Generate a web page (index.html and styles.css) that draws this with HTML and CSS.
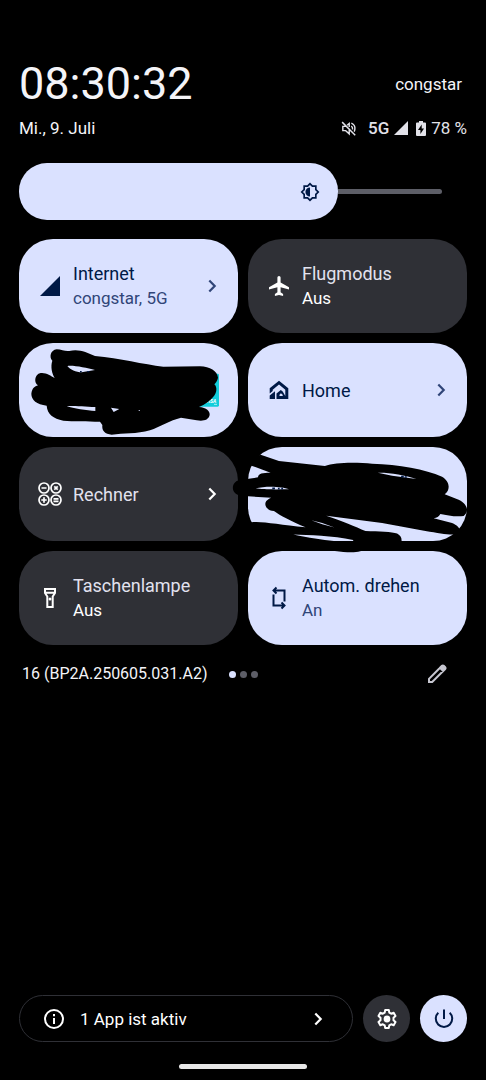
FILE: index.html
```html
<!DOCTYPE html>
<html lang="de">
<head>
<meta charset="utf-8">
<meta name="viewport" content="width=device-width, initial-scale=1">
<title>Schnelleinstellungen</title>
<link rel="stylesheet" href="styles.css">
</head>
<body>
<svg class="defs" aria-hidden="true">
  <symbol id="chevron" viewBox="0 0 24 24"><path d="M9.300 6.500 14.700 12l-5.400 5.500" fill="none" stroke="currentColor" stroke-width="2.200"/></symbol>
</svg>
<main class="panel">
  <header class="header">
    <div class="header-row">
      <time class="clock">08:30:32</time>
      <span class="carrier">congstar</span>
    </div>
    <div class="header-row">
      <span class="date">Mi., 9. Juli</span>
      <div class="status">
        <svg class="status-mute" viewBox="0 0 24 24" aria-label="Stumm">
          <g fill="none" stroke="currentColor" stroke-width="2">
            <path d="M9 9H4v6h4l5 4.500V13M10 7.500 13 5v5M16 8.500c1.500 1.200 2 2.500 1.800 5M16 4.500c3.500 1.500 5.500 4.500 5 8.500-.200 1.500-.500 2.500-1 3.300M3 3l18.500 18.500"/>
          </g>
        </svg>
        <span class="network">5G</span>
        <svg class="status-signal" viewBox="0 0 14 14" aria-hidden="true"><path d="M0 14H14V0z" fill="currentColor"/></svg>
        <svg class="status-battery" viewBox="0 0 10 15" aria-hidden="true"><path fill="currentColor" fill-rule="evenodd" d="M3 0h4v1.500h2a1 1 0 0 1 1 1V14a1 1 0 0 1-1 1H1a1 1 0 0 1-1-1V2.500a1 1 0 0 1 1-1h2zM5.700 3.500 2 9h2.400v4L8 7.500H5.700z"/></svg>
        <span>78 %</span>
      </div>
    </div>
  </header>

  <div class="brightness">
    <div class="brightness-level">
      <svg class="brightness-icon" viewBox="0 0 24 24" aria-hidden="true"><path fill="currentColor" d="M20 8.690V4h-4.690L12 .690 8.690 4H4v4.690L.690 12 4 15.310V20h4.690L12 23.310 15.310 20H20v-4.690L23.310 12 20 8.690zm-2 5.790V18h-3.520L12 20.480 9.520 18H6v-3.520L3.520 12 6 9.520V6h3.520L12 3.520 14.480 6H18v3.520L20.480 12 18 14.480zM12 6.500a5.500 5.500 0 0 0 0 11z"/></svg>
    </div>
    <div class="brightness-rail"></div>
    <input class="brightness-input" type="range" min="0" max="100" value="75" aria-label="Helligkeit">
  </div>

  <section class="tiles">
    <button class="tile on" type="button">
      <svg class="icon" viewBox="0 0 24 24"><path d="M2 22H22V2z" fill="currentColor"/></svg>
      <span class="tile-text"><span class="tile-name">Internet</span><span class="tile-state">congstar, 5G</span></span>
      <svg class="icon chevron"><use href="#chevron"/></svg>
    </button>
    <button class="tile" type="button">
      <svg class="icon" viewBox="0 0 24 24"><path fill="currentColor" d="M22 15.500v-2.300l-8.400-4.800V3.500a1.600 1.600 0 0 0-3.200 0v4.900L2 13.200v2.300l8.400-2.300v5l-2.500 1.900V22l4.100-1 4.100 1v-1.900l-2.500-1.900v-5z"/></svg>
      <span class="tile-text"><span class="tile-name">Flugmodus</span><span class="tile-state">Aus</span></span>
    </button>
    <button class="tile on" type="button" aria-label="Wallet">
      <svg class="scribble" viewBox="27 24 657 282">
        <rect x="540" y="116" width="87" height="99" rx="4" fill="#12cddb"/>
        <text class="card-brand" x="586" y="204">VISA</text>
        <path d="M612 208h9" stroke="#fff" stroke-width="2"/>
        <path fill-rule="evenodd" d="M140 43C155 43 165 50 178 48 205 40 230 52 255 63 330 70 400 88 460 95L570 94C600 95 622 108 624 128 622 138 617 143 613 148 622 155 621 175 610 185 600 198 585 208 567 216 590 218 600 228 599 240 595 256 580 259 560 256L513 248C480 256 450 275 420 286 380 297 340 295 305 299 285 297 275 288 277 270L270 260C230 259 190 260 160 257 130 250 112 238 110 212 80 208 64 195 64 176 66 160 74 154 84 151 72 145 72 118 92 114 108 112 122 122 134 129 126 115 121 95 127 77 117 68 121 45 140 43ZM172 93C180 104 198 112 215 112L255 105C230 99 190 90 172 93ZM170 213C190 221 230 226 256 228V216C225 215 190 212 170 213ZM303 218 311 231 328 222ZM386 226l4 0 0 2-4 0Z"/>
        <path d="M210 110h5M232 110h6" stroke="#001946" stroke-width="4"/>
      </svg>
    </button>
    <button class="tile on" type="button">
      <svg class="icon" viewBox="0 0 24 24"><path fill="currentColor" fill-rule="evenodd" d="M12 2.800 21.300 10.300V21H9.500v-5.600l4.300-3.500 1.900 1.500L18.300 18V11.700L12 6.600 5.700 11.700V13L2.700 15.400V10.300zM12.500 16.800V18h3.200v-1.200l-1.800-1.500zM2.700 17.500 8 13.300V21H2.700z"/></svg>
      <span class="tile-text"><span class="tile-name">Home</span></span>
      <svg class="icon chevron"><use href="#chevron"/></svg>
    </button>
    <button class="tile" type="button">
      <svg class="icon" viewBox="0 0 24 24"><g fill="none" stroke="currentColor" stroke-width="1.700"><circle cx="6" cy="6" r="5"/><circle cx="18" cy="6" r="5"/><circle cx="6" cy="18" r="5"/><circle cx="18" cy="18" r="5"/><path d="M3.500 6h5M16.300 4.300l3.400 3.400M19.700 4.300l-3.400 3.400M3.300 18h5.400M6 15.300v5.400M15.500 16.900h5M15.500 19.300h5"/></g></svg>
      <span class="tile-text"><span class="tile-name">Rechner</span></span>
      <svg class="icon chevron"><use href="#chevron"/></svg>
    </button>
    <button class="tile on" type="button" aria-label="Kachel">
      <svg class="scribble" viewBox="67 36 658 282">
        <path fill-rule="evenodd" d="M105 59 160 78 298 93C330 80 400 82 440 86 520 88 600 103 650 125 675 140 675 165 658 178L700 194C728 208 732 230 715 243 690 247 665 240 645 237 640 245 635 248 625 250L680 264C700 272 708 285 700 296 680 303 650 296 600 288L470 264 302 242C350 258 390 275 420 288 460 289 500 290 515 296 527 303 530 310 528 325V340H420C410 355 370 354 328 348L60 342V262H78C110 258 160 270 240 277 200 260 160 240 145 228 125 228 113 210 122 198 130 190 135 188 137 188L67 184 40 180C15 175 15 140 42 135L97 127C98 115 110 113 135 113L75 91 70 70ZM90 160C110 164 150 163 190 163 170 154 120 152 90 160ZM457 113 500 122 573 132C540 120 490 112 457 113ZM257 256 290 268 327 278 290 264ZM203 299C250 309 290 315 325 318H383V315C320 303 250 300 203 299Z"/>
        <path d="M140 160h8M157 161h5M167 161h5M527 125h8M538 126h6" stroke="#001946" stroke-width="5"/>
      </svg>
    </button>
    <button class="tile" type="button">
      <svg class="icon" viewBox="0 0 24 24"><path fill="none" stroke="currentColor" stroke-width="2" d="M7 3h10v4l-2.300 3.500V21H9.300V10.500L7 7zM7 6.700h10"/><circle cx="12" cy="13" r="1.500" fill="currentColor"/></svg>
      <span class="tile-text"><span class="tile-name">Taschenlampe</span><span class="tile-state">Aus</span></span>
    </button>
    <button class="tile on" type="button">
      <svg class="icon" viewBox="0 0 24 24"><path fill="none" stroke="currentColor" stroke-width="2" d="M7.500 4.500H17.500V15.500M6.500 8.500V19.500H16.500M9.500 1.500l-3 3 3 3M14.500 16.500l3 3-3 3"/></svg>
      <span class="tile-text"><span class="tile-name">Autom. drehen</span><span class="tile-state">An</span></span>
    </button>
  </section>

  <div class="build-row">
    <span class="build">16 (BP2A.250605.031.A2)</span>
    <span class="pages"><i class="dot current"></i><i class="dot"></i><i class="dot"></i></span>
    <button class="edit" type="button" aria-label="Bearbeiten">
      <svg class="icon" viewBox="0 0 24 24"><path d="M4 20v-3.200L15.800 5 19 8.200 7.200 20zM15 5.800 17 3.800a1.200 1.200 0 0 1 1.700 0L20.200 5.300a1.200 1.200 0 0 1 0 1.700L18.200 9z" fill="none" stroke="currentColor" stroke-width="2"/><path d="m15 5.800 2.500-2.500 3.200 3.200L18.200 9z" fill="currentColor"/></svg>
    </button>
  </div>

  <footer class="footer">
    <div class="actions">
      <button class="active-apps" type="button">
        <svg class="icon" viewBox="0 0 24 24"><circle cx="12" cy="12" r="9" fill="none" stroke="currentColor" stroke-width="2"/><path d="M12 7v2.200M12 11v6" stroke="currentColor" stroke-width="2"/></svg>
        <span class="active-label">1 App ist aktiv</span>
        <svg class="icon"><use href="#chevron"/></svg>
      </button>
      <button class="round" type="button" aria-label="Einstellungen">
        <svg class="icon" viewBox="0 0 24 24"><path fill="none" stroke="currentColor" stroke-width="2" stroke-linejoin="round" d="M10.200 3h3.600l.5 2.600 1.900 1.100 2.500-.9 1.800 3.100-2 1.800v2.600l2 1.800-1.800 3.100-2.500-.9-1.900 1.100-.5 2.600h-3.600l-.5-2.600-1.900-1.100-2.500.9-1.800-3.100 2-1.800v-2.600l-2-1.800 1.800-3.100 2.500.9 1.900-1.100z"/><circle cx="12" cy="12" r="3.400" fill="currentColor"/></svg>
      </button>
      <button class="round on" type="button" aria-label="Ein/Aus">
        <svg class="icon" viewBox="0 0 24 24"><path fill="none" stroke="currentColor" stroke-width="2" d="M12 2.500V12M6.300 5.800a8.200 8.200 0 1 0 11.400 0"/></svg>
      </button>
    </div>
    <div class="home-bar"></div>
  </footer>
</main>
</body>
</html>
```
FILE: styles.css
```css
* {
  box-sizing: border-box;
}

body {
  margin: 0;
  background: #000;
  color: #f4f4f8;
  font: 400 17px/24px Roboto, "Liberation Sans", sans-serif;
}

button {
  margin: 0;
  padding: 0;
  border: 0;
  background: none;
  color: inherit;
  font: inherit;
  text-align: left;
}

.defs {
  position: absolute;
  width: 0;
  height: 0;
}

.panel {
  display: flex;
  flex-direction: column;
  min-height: 100vh;
  padding: 60px 19px 11px;
}

.header {
  display: grid;
  gap: 8px;
}

.header-row {
  display: flex;
  align-items: center;
  justify-content: space-between;
}

.clock {
  font-size: 45px;
  line-height: 48px;
}

.carrier {
  padding-right: 5px;
}

.status {
  display: flex;
  align-items: center;
  color: #e2e2e9;
}

.status-mute {
  width: 17px;
  height: 17px;
  margin-right: 11px;
}

.network {
  font-weight: 500;
}

.status-signal {
  width: 14px;
  height: 14px;
  margin: 0 8px 0 5px;
}

.status-battery {
  width: 10px;
  height: 15px;
  margin-right: 5px;
}

.brightness {
  position: relative;
  display: flex;
  align-items: center;
  margin-top: 23px;
  padding-right: 25px;
}

.brightness-level {
  display: flex;
  align-items: center;
  justify-content: flex-end;
  flex: 0 0 75.4%;
  height: 57px;
  padding-right: 18px;
  border-radius: 28px;
  background: #dae1ff;
  color: #001946;
}

.brightness-icon {
  width: 20px;
  height: 20px;
}

.brightness-rail {
  flex: 1;
  height: 5px;
  border-radius: 0 3px 3px 0;
  background: #5d5e67;
}

.brightness-input {
  position: absolute;
  inset: 0;
  width: 100%;
  margin: 0;
  opacity: 0;
}

.tiles {
  display: grid;
  grid-template-columns: 1fr 1fr;
  gap: 10px;
  margin-top: 19px;
}

.tile {
  position: relative;
  display: flex;
  align-items: center;
  gap: 11px;
  min-height: 94px;
  padding: 0 14px 0 19px;
  border-radius: 34px;
  background: #2f3036;
  color: #fff;
}

.icon {
  flex: none;
  display: block;
  width: 24px;
  height: 24px;
}

.tile-text {
  flex: 1;
  display: grid;
  line-height: 25px;
}

.tile-name {
  color: #e2e2ef;
  font-size: 18px;
}

.on {
  background: #dae1ff;
  color: #001946;
}

.on .tile-name {
  color: #001946;
}

.on .tile-state,
.on .chevron {
  color: #304578;
}

.scribble {
  position: absolute;
  inset: 0;
  z-index: 1;
  width: 100%;
  height: 100%;
  overflow: visible;
  fill: #000;
}

.card-brand {
  fill: #fff;
  font: italic 700 15px Roboto, sans-serif;
}

.build-row {
  display: grid;
  grid-template-columns: 1fr auto 1fr;
  align-items: center;
  margin-top: 17px;
  padding: 0 18px 0 3px;
}

.build {
  font-size: 16px;
  white-space: nowrap;
}

.pages {
  display: flex;
  gap: 4px;
  margin-left: 15px;
}

.dot {
  width: 7px;
  height: 7px;
  border-radius: 50%;
  background: #5d5e67;
}

.dot.current {
  background: #dae1ff;
}

.edit {
  justify-self: end;
  color: #c6c6d0;
}

.footer {
  margin-top: auto;
}

.actions {
  display: flex;
  gap: 10px;
}

.active-apps {
  flex: 1;
  display: flex;
  align-items: center;
  gap: 14px;
  padding: 0 22px;
  border: 1px solid #2f3036;
  border-radius: 24px;
  color: #fff;
}

.active-label {
  flex: 1;
}

.round {
  display: grid;
  place-items: center;
  width: 47px;
  height: 47px;
  border-radius: 50%;
  background: #2f3036;
  color: #fff;
}

.round.on {
  background: #dae1ff;
  color: #001946;
}

.home-bar {
  width: 128px;
  height: 5px;
  margin: 22px auto 0;
  border-radius: 3px;
  background: #e8e8e8;
}
```
